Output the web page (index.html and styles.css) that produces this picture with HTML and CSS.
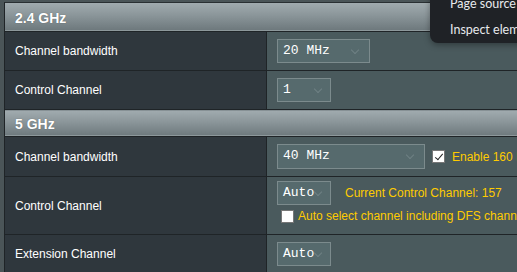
FILE: index.html
```html
<!DOCTYPE html>
<html lang="en">
<head>
  <meta charset="UTF-8" />
  <title>Wireless - General</title>
  <link rel="stylesheet" href="styles.css">
</head>
<body>
  <div class="panel">
    <table class="form-table">
      <tr class="band">
        <th colspan="2">2.4 GHz</th>
      </tr>
      <tr>
        <td class="label">Channel bandwidth</td>
        <td class="field">
          <div class="select w-wide">20 MHz<span class="arrow"></span></div>
        </td>
      </tr>
      <tr>
        <td class="label">Control Channel</td>
        <td class="field">
          <div class="select w-small">1<span class="arrow"></span></div>
        </td>
      </tr>
      <tr class="band band-5">
        <th colspan="2">5 GHz</th>
      </tr>
      <tr class="tall">
        <td class="label">Channel bandwidth</td>
        <td class="field">
          <div class="inline">
            <div class="select w-xwide">40 MHz<span class="arrow"></span></div>
            <span class="check checked"></span>
            <span class="hint">Enable 160 <span class="hint-green">MHz</span></span>
          </div>
        </td>
      </tr>
      <tr class="double">
        <td class="label">Control Channel</td>
        <td class="field">
          <div class="inline">
            <div class="select w-small">Auto<span class="arrow"></span></div>
            <span class="hint current">Current Control Channel: 157</span>
          </div>
          <div class="inline dfs">
            <span class="check"></span>
            <span class="hint">Auto select channel including DFS channels</span>
          </div>
        </td>
      </tr>
      <tr>
        <td class="label">Extension Channel</td>
        <td class="field">
          <div class="select w-small">Auto<span class="arrow"></span></div>
        </td>
      </tr>
    </table>
  </div>

  <div class="context-menu">
    <div class="menu-item">Page source</div>
    <div class="menu-item">Inspect element</div>
  </div>
</body>
</html>
```

FILE: styles.css
```css
:root {
  --page: #4b5558;
  --edge: #1f2427;
  --label-bg: #2f373d;
  --field-bg: #4a5a5d;
  --select-bg: #566a6d;
  --select-border: #7c8b8d;
  --yellow: #ffcc00;
}

body {
  margin: 0;
  background: var(--page);
  font-family: Arial, "Liberation Sans", sans-serif;
  font-size: 12px;
  color: #fff;
  overflow: hidden;
}

.panel {
  margin: 2px 0 0 4px;
  border-top: 1px solid #2a3033;
  border-left: 1px solid var(--edge);
  width: 600px;
}

.form-table {
  width: 100%;
  border-collapse: collapse;
}

.form-table td,
.form-table th {
  padding: 0;
  border-bottom: 1px solid var(--edge);
}

.band th {
  height: 27px;
  text-align: left;
  padding-left: 10px;
  padding-top: 1px;
  font-weight: bold;
  font-size: 14px;
  color: #fff;
  text-shadow: 0 0 1px rgba(0, 0, 0, 0.4);
  background: linear-gradient(to bottom, #a1abaf 0%, #8a9599 45%, #6c777b 100%);
  box-shadow: inset 0 -1px 0 #8d989b;
}

.band-5 th {
  height: 25px;
}

.label {
  width: 251px;
  height: 38px;
  padding-left: 10px !important;
  background: var(--label-bg);
  border-right: 1px solid var(--edge);
}

.tall .label {
  height: 39px;
}

.double .label {
  height: 57px;
}

.field {
  background: var(--field-bg);
  padding-left: 10px !important;
}

.double .field {
  vertical-align: top;
  padding-top: 4px !important;
}

.inline {
  display: flex;
  align-items: center;
}

.select {
  position: relative;
  box-sizing: border-box;
  height: 24px;
  line-height: 22px;
  padding-left: 5px;
  background: var(--select-bg);
  border: 1px solid var(--select-border);
  font-family: "Liberation Mono", "Courier New", monospace;
  font-size: 13px;
  color: #fff;
}

.tall .select {
  height: 25px;
}

.w-wide { width: 93px; }
.w-small { width: 54px; }
.w-xwide { width: 148px; }

.arrow {
  position: absolute;
  right: 11px;
  top: 7px;
  width: 5px;
  height: 5px;
  border-right: 1px solid #6f8184;
  border-bottom: 1px solid #6f8184;
  transform: rotate(45deg);
}

.w-small .arrow {
  right: 9px;
}

.check {
  box-sizing: border-box;
  display: inline-block;
  width: 13px;
  height: 13px;
  background: #fff;
  border: 1px solid #777;
  position: relative;
}

.checked::after {
  content: "";
  position: absolute;
  left: 4px;
  top: 1px;
  width: 3px;
  height: 7px;
  border-right: 1.5px solid #222;
  border-bottom: 1.5px solid #222;
  transform: rotate(40deg);
}

.w-xwide + .check {
  margin-left: 7px;
}

.hint {
  color: var(--yellow);
  margin-left: 7px;
  white-space: nowrap;
}

.hint-green {
  color: #3cb043;
}

.current {
  margin-left: 14px;
}

.dfs {
  margin-top: 4px;
  margin-left: 4px;
}

.dfs .hint {
  margin-left: 4px;
}

.context-menu {
  position: absolute;
  left: 430px;
  top: -9px;
  width: 140px;
  background: #1f2226;
  border-radius: 8px;
  box-shadow: 0 2px 6px rgba(0, 0, 0, 0.35);
  font-family: Lato, "Noto Sans", sans-serif;
  font-size: 12.5px;
  color: #e8eaed;
}

.menu-item {
  padding-left: 20px;
  height: 26px;
  line-height: 26px;
}
```
